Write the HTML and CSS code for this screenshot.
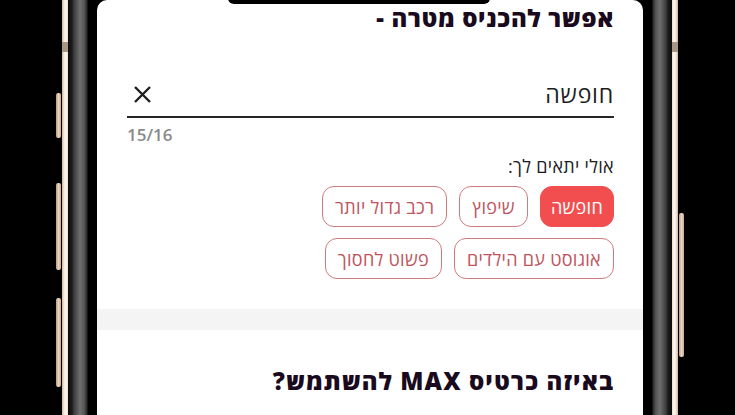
FILE: index.html
```html
<!DOCTYPE html>
<html lang="he">
<head>
<meta charset="utf-8">
<link rel="stylesheet" href="styles.css">
</head>
<body>
<div class="stage">
  <div class="phone">
    <span class="btn btn-l1"></span>
    <span class="btn btn-l2"></span>
    <span class="btn btn-l3"></span>
    <span class="btn btn-r1"></span>
    <span class="mark mark-l"></span>
    <span class="mark mark-r"></span>
    <div class="bezel bezel-l"></div>
    <div class="screen" dir="rtl">
      <div class="notch"></div>
      <h1 class="title">אפשר להכניס מטרה -</h1>
      <div class="field">
        <span class="field-value">חופשה</span>
        <svg class="clear" width="19" height="19" viewBox="0 0 19 19"><path d="M2 2 L17 17 M17 2 L2 17" stroke="#1f1f1f" stroke-width="2.4" stroke-linecap="butt"/></svg>
      </div>
      <div class="counter" dir="ltr">15/16</div>
      <div class="label">אולי יתאים לך:</div>
      <div class="chips">
        <span class="chip chip-active">חופשה</span>
        <span class="chip">שיפוץ</span>
        <span class="chip">רכב גדול יותר</span>
      </div>
      <div class="chips">
        <span class="chip">אוגוסט עם הילדים</span>
        <span class="chip">פשוט לחסוך</span>
      </div>
      <div class="band"></div>
      <h2 class="title title-2">באיזה כרטיס MAX להשתמש?</h2>
    </div>
    <div class="bezel bezel-r"></div>
  </div>
</div>
</body>
</html>
```

FILE: styles.css
```css
html, body {
  margin: 0;
  padding: 0;
  background: #000;
  width: 735px;
  height: 415px;
  overflow: hidden;
}
.stage {
  width: 735px;
  height: 415px;
  padding-left: 62px;
  box-sizing: border-box;
}
.phone {
  position: relative;
  width: 616px;
  height: 415px;
  box-sizing: border-box;
  padding: 0 6px;
  display: flex;
  background: linear-gradient(to right, #cdb59c 0, #f4e6d8 2px, #fffaf4 4px, #e9d9c8 6px, transparent 6px, transparent calc(100% - 6px), #e9d9c8 calc(100% - 6px), #fffaf4 calc(100% - 4px), #f4e6d8 calc(100% - 2px), #cdb59c 100%);
}
.bezel {
  width: 29px;
  flex: none;
}
.bezel-l {
  background: linear-gradient(to right, #0c0c0c 0, #1c1c1c 4px, #3c3c3c 6px, #6e6e6e 12px, #575757 16px, #2a2a2a 19px, #000 20px, #000 29px);
}
.bezel-r {
  background: linear-gradient(to left, #0c0c0c 0, #1c1c1c 4px, #3c3c3c 6px, #6e6e6e 12px, #575757 16px, #2a2a2a 19px, #000 20px, #000 29px);
}
.screen {
  position: relative;
  width: 546px;
  flex: none;
  background: #fff;
  box-sizing: border-box;
  padding: 3px 29px 0 30px;
  font-family: "Open Sans", "DejaVu Sans", sans-serif;
  color: #1d1d1d;
  border-top-left-radius: 10px;
  border-top-right-radius: 10px;
}
.notch {
  position: absolute;
  top: -2px;
  left: 131px;
  width: 262px;
  height: 6px;
  background: #000;
  border-radius: 0 0 6px 6px;
}
.title {
  margin: 0;
  font-size: 24px;
  line-height: 30px;
  font-weight: 800;
  letter-spacing: 0.6px;
  color: #1a0a1d;
}
.field {
  margin-top: 39px;
  height: 44px;
  border-bottom: 2px solid #262626;
  display: flex;
  align-items: center;
  justify-content: space-between;
  padding-left: 6px;
}
.field-value {
  font-size: 23px;
  line-height: 28px;
  letter-spacing: 0.8px;
  color: #1d1d1d;
}
.clear {
  display: block;
}
.counter {
  margin-top: 7px;
  font-size: 17px;
  line-height: 20px;
  font-weight: 600;
  color: #8a8a8a;
  text-align: left;
}
.label {
  margin-top: 10px;
  font-size: 18px;
  line-height: 22px;
  letter-spacing: 0.3px;
  color: #1d1d1d;
}
.chips {
  display: flex;
  gap: 12px;
  margin-top: 9px;
}
.chips + .chips {
  margin-top: 11px;
}
.chip {
  height: 41px;
  box-sizing: border-box;
  padding: 0 12px;
  border: 1.5px solid #cf7a7f;
  border-radius: 12px;
  display: flex;
  align-items: center;
  font-size: 18px;
  letter-spacing: 0.3px;
  color: #c0545d;
}
.chip-active {
  padding: 0 10px;
  background: #f24e50;
  border-color: #f24e50;
  color: #fff;
}
.band {
  margin: 30px -29px 0 -30px;
  height: 21px;
  background: #f4f4f4;
}
.title-2 {
  margin-top: 37px;
  font-size: 24px;
  line-height: 28px;
  letter-spacing: 1.1px;
}
.btn {
  position: absolute;
  width: 5px;
  background: linear-gradient(to right, #b89a80, #ead4c0, #c8aa90);
  border-radius: 2px;
}
.btn-l1 { left: -6px; top: 93px; height: 45px; }
.btn-l2 { left: -6px; top: 183px; height: 87px; }
.btn-l3 { left: -6px; top: 298px; height: 89px; }
.btn-r1 { right: -6px; top: 213px; height: 144px; }
.mark {
  position: absolute;
  top: 42px;
  width: 6px;
  height: 10px;
  background: #a89684;
}
.mark-l { left: 0; }
.mark-r { right: 0; }
```
